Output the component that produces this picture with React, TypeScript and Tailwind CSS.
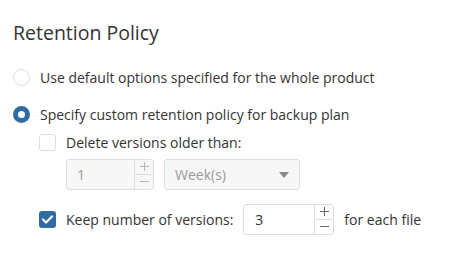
import React from "react";

const Spinner = ({ disabled }: { disabled?: boolean }) => {
  const c = disabled ? "#b5b5b5" : "#666";
  return (
    <div className="flex flex-col w-[19px] border-l border-[#ddd]">
      <div className="h-1/2 flex items-center justify-center border-b border-[#ddd]">
        <svg width="9" height="9" viewBox="0 0 9 9"><path d="M4.5 0v9M0 4.5h9" stroke={c} strokeWidth="1" /></svg>
      </div>
      <div className="h-1/2 flex items-center justify-center">
        <svg width="9" height="9" viewBox="0 0 9 9"><path d="M0 4.5h9" stroke={c} strokeWidth="1" /></svg>
      </div>
    </div>
  );
};

const App = () => {
  return (
    <div className="w-[457px] h-[260px] bg-white text-[#333] text-[14px] font-['Open_Sans',sans-serif] px-[13px] pt-[20px]">
      <h2 className="text-[19.5px] leading-[26px] text-[#333]">Retention Policy</h2>

      <div className="mt-[22px] flex items-center gap-[10px] h-[18px]">
        <span className="w-[17px] h-[17px] rounded-full border border-[#ddd] bg-white" />
        <span>Use default options specified for the whole product</span>
      </div>

      <div className="mt-[19px] flex items-center gap-[10px] h-[18px]">
        <span className="w-[17px] h-[17px] rounded-full border-[5px] border-[#2e6da4] bg-white" />
        <span>Specify custom retention policy for backup plan</span>
      </div>

      <div className="pl-[26px]">
        <div className="mt-[10px] flex items-center gap-[10px] h-[18px]">
          <span className="w-[17px] h-[17px] rounded-[3px] border border-[#ddd] bg-white" />
          <span>Delete versions older than:</span>
        </div>

        <div className="mt-[8px] ml-[27px] flex gap-[10px] h-[31px]">
          <div className="flex w-[88px] rounded-[3px] border border-[#ddd] bg-[#f7f7f7]">
            <div className="flex-1 flex items-center pl-[10px] text-[#999]">1</div>
            <Spinner disabled />
          </div>
          <div className="flex items-center justify-between w-[136px] rounded-[3px] border border-[#ddd] bg-[#f7f7f7] pl-[10px] pr-[10px] text-[#999]">
            <span>Week(s)</span>
            <svg width="10" height="6" viewBox="0 0 10 6"><path d="M0 0h10L5 6z" fill="#888" /></svg>
          </div>
        </div>

        <div className="mt-[14px] flex items-center gap-[10px] h-[31px]">
          <span className="w-[17px] h-[17px] rounded-[3px] bg-[#2e6da4] flex items-center justify-center">
            <svg width="11" height="9" viewBox="0 0 11 9"><path d="M1 4.5l3 3L10 1.5" stroke="#fff" strokeWidth="2.2" fill="none" strokeLinecap="round" strokeLinejoin="round" /></svg>
          </span>
          <span>Keep number of versions:</span>
          <div className="flex w-[91px] h-[31px] rounded-[3px] border border-[#ddd] bg-white">
            <div className="flex-1 flex items-center pl-[11px] text-[#333]">3</div>
            <Spinner />
          </div>
          <span>for each file</span>
        </div>
      </div>
    </div>
  );
};

export default App;
